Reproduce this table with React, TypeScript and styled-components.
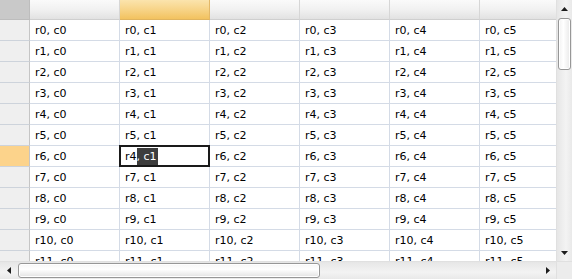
import React from 'react';
import styled, { createGlobalStyle } from 'styled-components';

const GlobalStyle = createGlobalStyle`
  html, body {
    margin: 0;
    padding: 0;
    background: #ffffff;
  }
  body {
    font-family: 'DejaVu Sans', Verdana, sans-serif;
    font-size: 11px;
    color: #000;
  }
`;

const COLS = 6;
const ROWS = 12;
const SELECTED_ROW = 6;
const SELECTED_COL = 1;

const Frame = styled.div`
  width: 572px;
  height: 279px;
  display: grid;
  grid-template-columns: 1fr 16px;
  grid-template-rows: 1fr 18px;
  overflow: hidden;
  background: #fff;
`;

const Viewport = styled.div`
  overflow: hidden;
  min-width: 0;
  min-height: 0;
`;

const Sheet = styled.div`
  display: grid;
  grid-template-columns: 30px repeat(${COLS}, 90px);
  grid-auto-rows: 21px;
  grid-template-rows: 20px;
  width: max-content;
`;

const Corner = styled.div`
  background: #c9c9c9;
  border-right: 1px solid #bdbdbd;
  border-bottom: 1px solid #bdbdbd;
`;

const ColHeader = styled.div<{ $active: boolean }>`
  background: ${p =>
    p.$active
      ? 'linear-gradient(to bottom, #fbe4ad 0%, #f7d488 50%, #f2c25f 100%)'
      : 'linear-gradient(to bottom, #fafafa 0%, #f1f1f1 50%, #e2e2e2 100%)'};
  border-right: 1px solid ${p => (p.$active ? '#e3b868' : '#d6d6d6')};
  border-bottom: 1px solid ${p => (p.$active ? '#e0b45e' : '#cfcfcf')};
`;

const RowHeader = styled.div<{ $active: boolean }>`
  background: ${p => (p.$active ? '#fcd38b' : '#efefef')};
  border-right: 1px solid #c5c5c5;
  border-bottom: 1px solid #cdd3db;
`;

const Cell = styled.div`
  display: flex;
  align-items: center;
  padding-left: 5px;
  white-space: nowrap;
  overflow: hidden;
  border-right: 1px solid #d4dbe6;
  border-bottom: 1px solid #d4dbe6;
`;

const EditCell = styled.div`
  display: flex;
  align-items: center;
  padding-left: 4px;
  white-space: nowrap;
  overflow: hidden;
  margin: -1px 0 0 -1px;
  border: 2px solid #1a1a1a;
  position: relative;
  z-index: 1;
`;

const Highlight = styled.span`
  background: #3d3d3d;
  color: #fff;
  padding: 2px 1px 2px 0;
`;

const VTrack = styled.div`
  display: flex;
  flex-direction: column;
  background: linear-gradient(to right, #e6e6e6 0%, #f3f3f3 60%, #e9e9e9 100%);
  border-left: 1px solid #e0e0e0;
`;

const HTrack = styled.div`
  display: flex;
  flex-direction: row;
  align-items: stretch;
  background: linear-gradient(to bottom, #e6e6e6 0%, #f3f3f3 60%, #e9e9e9 100%);
  border-top: 1px solid #e0e0e0;
`;

const ArrowBtn = styled.div<{ $size: number }>`
  flex: 0 0 ${p => p.$size}px;
  display: flex;
  align-items: center;
  justify-content: center;
`;

const Spacer = styled.div`
  flex: 1;
`;

const VThumb = styled.div`
  flex: 0 0 50px;
  margin: 1px 1px 0 1px;
  border: 1px solid #979797;
  border-radius: 3px;
  background: linear-gradient(to right, #f2f2f2 0%, #ffffff 40%, #e9e9e9 100%);
  box-shadow: inset 0 0 0 1px #ffffff;
`;

const HThumb = styled.div`
  flex: 0 0 300px;
  margin: 1px 0 1px 1px;
  border: 1px solid #979797;
  border-radius: 3px;
  background: linear-gradient(to bottom, #f6f6f6 0%, #ffffff 40%, #e3e3e3 100%);
  box-shadow: inset 0 0 0 1px #ffffff;
`;

const ScrollCorner = styled.div`
  background: #ececec;
  border-top: 1px solid #e0e0e0;
  border-left: 1px solid #e0e0e0;
`;

type Dir = 'up' | 'down' | 'left' | 'right';

const Arrow: React.FC<{ dir: Dir }> = ({ dir }) => {
  const pts: Record<Dir, string> = {
    up: '0,4 3.5,0 7,4',
    down: '0,0 7,0 3.5,4',
    left: '4,0 4,7 0,3.5',
    right: '0,0 0,7 4,3.5',
  };
  const vertical = dir === 'up' || dir === 'down';
  return (
    <svg width={vertical ? 7 : 4} height={vertical ? 4 : 7}>
      <polygon points={pts[dir]} fill="#1c1c1c" />
    </svg>
  );
};

const App: React.FC = () => {
  const cols = Array.from({ length: COLS }, (_, i) => i);
  const rows = Array.from({ length: ROWS }, (_, i) => i);

  return (
    <>
      <GlobalStyle />
      <Frame>
        <Viewport>
          <Sheet>
            <Corner />
            {cols.map(c => (
              <ColHeader key={`h${c}`} $active={c === SELECTED_COL} />
            ))}
            {rows.map(r => (
              <React.Fragment key={r}>
                <RowHeader $active={r === SELECTED_ROW} />
                {cols.map(c =>
                  r === SELECTED_ROW && c === SELECTED_COL ? (
                    <EditCell key={c}>
                      r4<Highlight>, c1</Highlight>
                    </EditCell>
                  ) : (
                    <Cell key={c}>{`r${r}, c${c}`}</Cell>
                  )
                )}
              </React.Fragment>
            ))}
          </Sheet>
        </Viewport>
        <VTrack>
          <ArrowBtn $size={17}>
            <Arrow dir="up" />
          </ArrowBtn>
          <VThumb />
          <Spacer />
          <ArrowBtn $size={17}>
            <Arrow dir="down" />
          </ArrowBtn>
        </VTrack>
        <HTrack>
          <ArrowBtn $size={17}>
            <Arrow dir="left" />
          </ArrowBtn>
          <HThumb />
          <Spacer />
          <ArrowBtn $size={17}>
            <Arrow dir="right" />
          </ArrowBtn>
        </HTrack>
        <ScrollCorner />
      </Frame>
    </>
  );
};

export default App;
